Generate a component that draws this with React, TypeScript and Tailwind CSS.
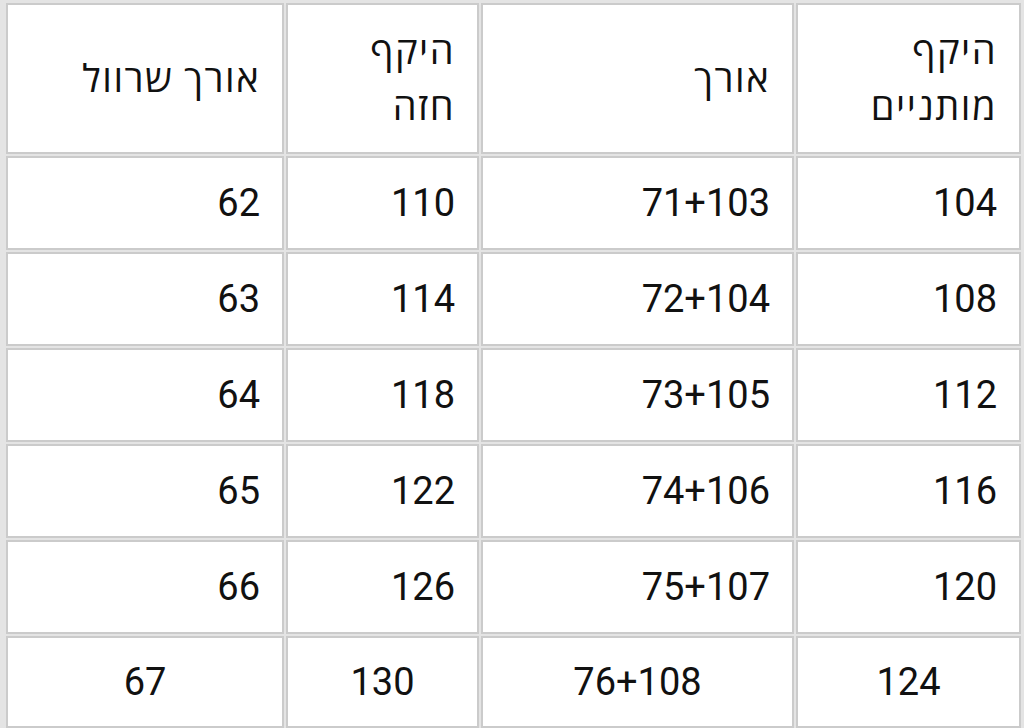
import React from "react";

const rows: string[][] = [
  ["104", "71+103", "110", "62"],
  ["108", "72+104", "114", "63"],
  ["112", "73+105", "118", "64"],
  ["116", "74+106", "122", "65"],
  ["120", "75+107", "126", "66"],
];

const last = ["124", "76+108", "130", "67"];

const base =
  "bg-white border-2 border-[#cbcbcb] flex items-center px-[22px] text-[38px] text-[#111]";
const cell = `${base} justify-start`;
const head = `${base} justify-start leading-[56px] tracking-[1.5px]`;
const centered = `${base} justify-center`;

export default function App() {
  return (
    <div
      dir="rtl"
      className="w-[1024px] h-[728px] overflow-hidden bg-[#e4e4e4] pt-[3px] pl-[6px] pr-[3px]"
      style={{ fontFamily: "Roboto, 'Open Sans', 'Noto Sans', 'Liberation Sans', 'DejaVu Sans', sans-serif" }}
    >
      <div className="grid grid-cols-[225px_313px_193px_278px] grid-rows-[151px_94px_94px_94px_94px_94px_92px] gap-[2px]">
        <div className={head}>
          <span>
            היקף
            <br />
            מותניים
          </span>
        </div>
        <div className={head}>אורך</div>
        <div className={head}>
          <span>
            היקף
            <br />
            חזה
          </span>
        </div>
        <div className={head}>אורך שרוול</div>
        {rows.map((r, i) =>
          r.map((v, j) => (
            <div key={`${i}-${j}`} className={cell}>
              {v}
            </div>
          ))
        )}
        {last.map((v, j) => (
          <div key={`l-${j}`} className={centered}>
            {v}
          </div>
        ))}
      </div>
    </div>
  );
}
